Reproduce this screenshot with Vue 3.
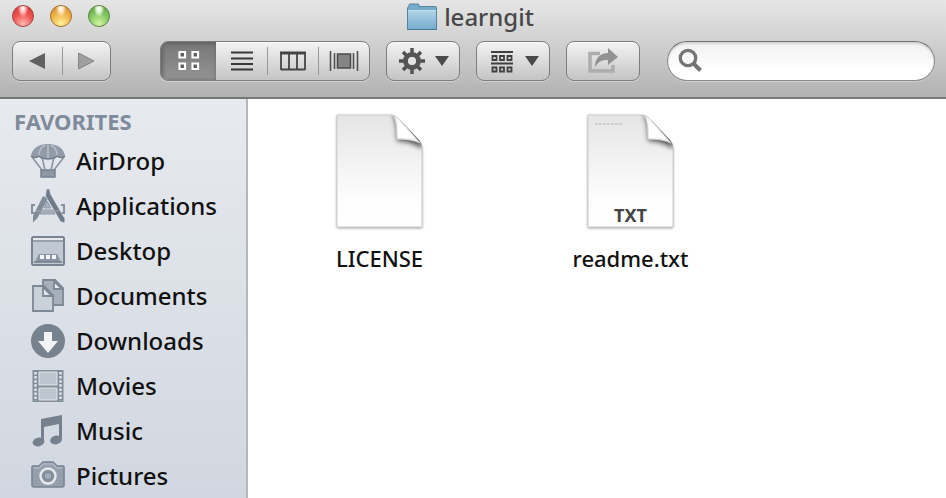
<script setup>
import { ref } from 'vue'

const places = ['AirDrop', 'Applications', 'Desktop', 'Documents', 'Downloads', 'Movies', 'Music', 'Pictures']
const files = [
  { name: 'LICENSE', kind: '' },
  { name: 'readme.txt', kind: 'TXT' },
]
const view = ref('icons')
const query = ref('')
</script>

<template>
  <div class="window">
    <header class="chrome">
      <div class="titlebar">
        <div class="lights">
          <button class="light red" aria-label="Close"></button>
          <button class="light amber" aria-label="Minimize"></button>
          <button class="light green" aria-label="Zoom"></button>
        </div>
        <h1 class="title">
          <svg width="32" height="28" viewBox="0 0 32 28" aria-hidden="true">
            <defs>
              <linearGradient id="folder" x1="0" y1="0" x2="0" y2="1">
                <stop offset="0" stop-color="#b3d4e7" />
                <stop offset="1" stop-color="#78acce" />
              </linearGradient>
            </defs>
            <path d="M1.500 26V4.500l1.500-1V2q0-1 1-1h8q1 0 1 1v1.500h16.500q1 0 1 1V26z" fill="#75abca" stroke="#5584a1" />
            <path d="M2 7h28v19H2z" fill="url(#folder)" />
            <path d="M2 7.500h28" stroke="#c1deed" />
            <path d="M1 26.500h30" stroke="#477693" />
          </svg>
          <span>learngit</span>
        </h1>
      </div>

      <div class="toolbar">
        <div class="group nav">
          <button class="seg" aria-label="Back">
            <svg width="18" height="18" viewBox="0 0 18 18"><path d="M1 9l16-8v16z" fill="#616161" /></svg>
          </button>
          <button class="seg" aria-label="Forward">
            <svg width="18" height="18" viewBox="0 0 18 18"><path d="M17 9L1.500 1v16z" fill="#a0a0a0" stroke="#858585" /></svg>
          </button>
        </div>

        <div class="group views">
          <button class="seg" :class="{ on: view === 'icons' }" aria-label="Icon view" @click="view = 'icons'">
            <svg width="24" height="22" viewBox="0 0 24 22" fill="#5a5a5a" stroke="#fff" stroke-width="2.200">
              <path d="M2.500 2h5.500v5.500H2.500zM15.500 2H21v5.500h-5.500zM2.500 13.500h5.500V19H2.500zM15.500 13.500H21V19h-5.500z" />
            </svg>
          </button>
          <button class="seg" :class="{ on: view === 'list' }" aria-label="List view" @click="view = 'list'">
            <svg width="22" height="22" viewBox="0 0 22 22" stroke="#383838" stroke-width="2">
              <path d="M0 2.500h22M0 8.500h22M0 14h22M0 19.500h22" />
            </svg>
          </button>
          <button class="seg" :class="{ on: view === 'columns' }" aria-label="Column view" @click="view = 'columns'">
            <svg width="26" height="20" viewBox="0 0 26 20" fill="none" stroke="#444" stroke-width="1.800">
              <path d="M1 2.500h24M1 18.500h24M1 1v18M9 2v17M17 2v17M25 1v18" />
              <path d="M0 1.500h26" />
            </svg>
          </button>
          <button class="seg" :class="{ on: view === 'flow' }" aria-label="Cover Flow view" @click="view = 'flow'">
            <svg width="30" height="20" viewBox="0 0 30 20" fill="none" stroke="#515151" stroke-width="1.600">
              <path d="M1.500 0v20M5.500 2v16M24.500 2v16M28.500 0v20" />
              <path d="M8.500 3h13v14h-13z" fill="#858585" stroke="#4c4c4c" stroke-width="1.600" />
            </svg>
          </button>
        </div>

        <button class="tool" aria-label="Action">
          <svg width="28" height="28" viewBox="-14 -14 28 28">
            <g stroke="#505050" stroke-width="3.400">
              <path d="M0-13V13M-13 0H13M-9-9L9 9M9-9L-9 9" />
            </g>
            <circle r="6.500" fill="#e2e2e2" stroke="#555" stroke-width="5" />
            <circle r="3.800" fill="#e2e2e2" />
          </svg>
          <svg width="14" height="10" viewBox="0 0 14 10"><path d="M0 0h14L7 10z" fill="#4a4a4a" /></svg>
        </button>
        <button class="tool" aria-label="Arrange">
          <svg class="arrange" width="22" height="24" viewBox="0 0 22 24" fill="none" stroke="#404040" stroke-width="1.800">
            <path d="M0 3h22M0 14.500h22" stroke-width="2" />
            <path d="M1.500 7h4v4h-4zM9 7h4v4H9zM16.500 7h4v4h-4zM1.500 18.500h4v4h-4zM9 18.500h4v4H9zM16.500 18.500h4v4h-4z" />
          </svg>
          <svg width="14" height="10" viewBox="0 0 14 10"><path d="M0 0h14L7 10z" fill="#4a4a4a" /></svg>
        </button>
        <button class="tool" aria-label="Share">
          <svg width="32" height="26" viewBox="0 0 32 26">
            <path d="M13 5.500H3V23h23v-6" fill="none" stroke="#adadad" stroke-width="3.500" />
            <path d="M21 0l10 9-10 8v-5c-6-.5-10 2-13 7C8 10.500 13 5 21 5z" fill="#929292" />
          </svg>
        </button>

        <label class="search">
          <svg width="26" height="26" viewBox="0 0 26 26" fill="none" stroke="#757575">
            <circle cx="10" cy="10" r="7.700" stroke-width="3.300" />
            <path d="M15.500 15.500l7 7" stroke-width="4" />
          </svg>
          <input v-model="query" type="search" aria-label="Search" />
        </label>
      </div>
    </header>

    <div class="body">
      <nav class="sidebar">
        <h2>FAVORITES</h2>
        <a v-for="place in places" :key="place" href="#">
          <svg width="36" height="36" viewBox="0 0 36 36" aria-hidden="true">
            <g v-if="place === 'AirDrop'">
              <path d="M2 14l10 13M34 14L24 27M12 14l3 13M24 14l-3 13" stroke="#8b95a1" stroke-width="1.600" />
              <path d="M1 13C2 5 9 1 18 1s16 4 17 12c-2 2-6 2-8 0-2 2-6 3-9 3s-7-1-9-3c-2 2-6 2-8 0z" fill="#929ca8" />
              <path d="M9 13c0-5 2-9 6-11M27 13c0-5-2-9-6-11M18 2v13" fill="none" stroke="#b6bec8" stroke-width="1.500" />
              <path d="M1 13c2 2 6 2 8 0 4 4 14 4 18 0 2 2 6 2 8 0" fill="none" stroke="#727e8b" stroke-width="1.500" />
              <path d="M11 27h14v7H11z" fill="#8f99a5" stroke="#778390" stroke-width="1.500" />
            </g>
            <g v-else-if="place === 'Applications'">
              <path d="M5 17H2v8h5M31 17h3v8h-5" fill="none" stroke="#87929f" stroke-width="2" />
              <path d="M11 22h14v4H10zM17 13l4 7h-7z" fill="#a7b0ba" stroke="#929ca8" />
              <path d="M13 8l5 2.500L7.500 30 3 34.500l0-6.500z" fill="#818c99" />
              <path d="M16.500 1h3l1 5L35 31l-.5 4-4-1.500L15.500 8z" fill="#6f7b88" stroke="#dce2e7" stroke-width=".6" />
              <path d="M6 23h23" stroke="#a0aab4" />
            </g>
            <g v-else-if="place === 'Desktop'" transform="translate(1 3)">
              <rect x="1" y="1" width="32" height="28" rx="1.500" fill="#c0c8d1" stroke="#788491" stroke-width="2" />
              <path d="M2 3h30" stroke="#eef1f4" stroke-width="1.600" />
              <path d="M2 5h30" stroke="#7c8794" stroke-width="1.200" />
              <path d="M8 18h18l4 8H4z" fill="#8a95a1" />
              <path d="M9 19h4v4H9zM15 19h4v4h-4zM21 19h4v4h-4z" fill="#f3f5f7" />
              <path d="M3 26h28" stroke="#737f8b" stroke-width="1.500" />
            </g>
            <g v-else-if="place === 'Documents'" stroke="#7d8895" stroke-width="1.800">
              <path d="M13 2h12l8 8v17H13z" fill="#a7b0bb" />
              <path d="M24 3v8h8z" fill="#e7eaee" />
              <path d="M3 8h11l9 9v16H3z" fill="#cbd1d8" />
              <path d="M13 9v9h9z" fill="#e3e7eb" />
            </g>
            <g v-else-if="place === 'Downloads'">
              <circle cx="18" cy="18" r="17" fill="#77828f" />
              <path d="M14 9h8v9h6L18 30 8 18h6z" fill="#f1f3f6" />
            </g>
            <g v-else-if="place === 'Movies'">
              <path d="M2.500 2h31v32h-31z" fill="#808c98" />
              <path d="M9 4h18v13H9zM9 20h18v12H9z" fill="#bdc5ce" stroke="#e2e6ea" />
              <path d="M5.500 4v29M30.500 4v29" stroke="#e3e7eb" stroke-width="2.500" stroke-dasharray="2.500 1.600" />
            </g>
            <g v-else-if="place === 'Music'" fill="#76818e">
              <path d="M11 6l21-4v24h-3V11l-15 3v15h-3z" />
              <ellipse cx="8.500" cy="29" rx="6" ry="4.300" transform="rotate(-12 8.500 29)" />
              <ellipse cx="26" cy="27" rx="6" ry="4.300" transform="rotate(-12 26 27)" />
            </g>
            <g v-else transform="translate(0 1)">
              <path d="M2 8q0-1 1-1h6l4-4h10l4 4h6q1 0 1 1v18q0 2-2 2H4q-2 0-2-2z" fill="#96a0ac" stroke="#788491" stroke-width="1.600" />
              <path d="M3 9h6l4-4h10l4 4h6" fill="none" stroke="#aeb7c1" stroke-width="1.500" />
              <circle cx="18" cy="17" r="7.500" fill="#8994a0" stroke="#e6eaee" stroke-width="2.400" />
              <circle cx="18" cy="17" r="4" fill="#a0a9b4" stroke="#78838f" />
            </g>
          </svg>
          <span>{{ place }}</span>
        </a>
      </nav>

      <main class="files">
        <button v-for="file in files" :key="file.name" class="file">
          <span class="page">
            <svg width="96" height="122" viewBox="0 0 96 122" aria-hidden="true">
              <defs>
                <linearGradient id="paper" x1="0" y1="0" x2="0" y2="1">
                  <stop offset="0" stop-color="#e5e5e5" />
                  <stop offset=".75" stop-color="#fdfdfd" />
                  <stop offset="1" stop-color="#fff" />
                </linearGradient>
                <filter id="soft" x="-20%" y="-20%" width="140%" height="140%"><feGaussianBlur stdDeviation="1.500" /></filter>
                <filter id="curl" x="-50%" y="-50%" width="200%" height="200%"><feGaussianBlur stdDeviation="2.500" /></filter>
                <clipPath id="sheet"><path d="M5 4h54q4 0 8 4l19 20q4 4 4 8v80H5z" /></clipPath>
              </defs>
              <path d="M5 5h54l31 31v81H5z" fill="#888" filter="url(#soft)" />
              <path d="M5 4h54q4 0 8 4l19 20q4 4 4 8v80H5z" fill="url(#paper)" stroke="#cfcfcf" />
              <g clip-path="url(#sheet)">
                <path d="M60 3q5 6 5 27 14 0 25 8V26L66 4z" fill="#555" filter="url(#curl)" />
              </g>
              <path d="M61 4q4 4 4 24 15 0 23 4L67 8q-3-3-6-4z" fill="#f4f4f4" stroke="#d2d2d2" />
              <path d="M66 9v18h17z" fill="#fff" />
              <path v-if="file.kind" d="M12 13h28" stroke="#cfcfcf" stroke-width="2" stroke-dasharray="3 1" />
            </svg>
            <span v-if="file.kind" class="kind">{{ file.kind }}</span>
          </span>
          <span class="name">{{ file.name }}</span>
        </button>
      </main>
    </div>
  </div>
</template>

<style>
body {
  margin: 0;
}
</style>

<style scoped>
* {
  box-sizing: border-box;
}
.window {
  display: flex;
  flex-direction: column;
  min-height: 100vh;
  background: #fff;
  font-family: "Noto Sans", "Open Sans", sans-serif;
  color: #111;
}
button {
  margin: 0;
  padding: 0;
  border: 0;
  background: none;
  font: inherit;
  color: inherit;
}
svg {
  display: block;
  flex: none;
}
.chrome {
  padding-bottom: 16px;
  border-bottom: 2px solid #777;
  background: linear-gradient(#e6e6e6, #cdcdcd 50%, #b2b2b2);
}
.titlebar {
  display: grid;
  grid-template-columns: 1fr auto 1fr;
  align-items: center;
  height: 34px;
  padding: 0 18px 0 12px;
}
.lights {
  display: flex;
  gap: 16px;
  padding-bottom: 2px;
}
.light {
  width: 22px;
  height: 22px;
  border-radius: 50%;
}
.red {
  border: 1px solid #a14240;
  background: radial-gradient(ellipse at 50% 12%, #fff 0, #fbb0ac 20%, transparent 36%), radial-gradient(circle at 50% 90%, #ffb9b0, #f0544f 50%, #c93633);
}
.amber {
  border: 1px solid #a56e2c;
  background: radial-gradient(ellipse at 50% 12%, #fff 0, #fbdcae 20%, transparent 36%), radial-gradient(circle at 50% 90%, #fff3a0, #f2b64a 50%, #cc8428);
}
.green {
  border: 1px solid #55883c;
  background: radial-gradient(ellipse at 50% 12%, #fff 0, #d5efc4 20%, transparent 36%), radial-gradient(circle at 50% 90%, #d5f7a6, #86c763 50%, #5a9c3f);
}
.title {
  display: flex;
  align-items: center;
  gap: 6px;
  margin: 0;
  font-size: 24px;
  line-height: 34px;
  font-weight: 500;
  color: #484848;
}
.toolbar {
  display: flex;
  align-items: center;
  gap: 16px;
  padding: 7px 11px 0 12px;
}
.group,
.tool {
  display: flex;
  flex: none;
  height: 40px;
  border: 1px solid #7d7d7d;
  border-radius: 8px;
  background: linear-gradient(#f3f3f3, #dcdcdc 50%, #c4c4c4);
  box-shadow: 0 1px 0 #d2d2d2, inset 0 1px 0 #fafafa;
  overflow: hidden;
}
.nav {
  width: 99px;
  margin-right: 33px;
}
.views {
  width: 210px;
}
.seg {
  display: flex;
  flex: 1;
  align-items: center;
  justify-content: center;
  position: relative;
}
.seg + .seg::before {
  content: "";
  position: absolute;
  left: 0;
  top: 5px;
  bottom: 5px;
  width: 1px;
  background: #999;
}
.views .seg:first-child {
  flex: 0 0 55px;
}
.seg.on {
  background: linear-gradient(#777, #939393);
  box-shadow: inset 1px 1px 4px #555;
}
.seg.on + .seg::before {
  display: none;
}
.tool {
  width: 74px;
  align-items: center;
  justify-content: center;
  gap: 9px;
}
.arrange {
  margin: 0 3px;
}
.search {
  display: flex;
  flex: 1;
  align-items: center;
  min-width: 0;
  height: 40px;
  margin-left: 11px;
  padding: 0 16px 0 10px;
  border: 1px solid #8b8b8b;
  border-top-color: #6f6f6f;
  border-radius: 20px;
  background: linear-gradient(#f1f1f1, #fff 70%);
  box-shadow: inset 0 2px 2px #d5d5d5, 0 1px 0 #d0d0d0;
}
.search input {
  flex: 1;
  min-width: 0;
  margin-left: 6px;
  border: 0;
  outline: 0;
  background: none;
  font: inherit;
  font-size: 22px;
}
.body {
  display: flex;
  flex: 1;
}
.sidebar {
  flex: none;
  width: 248px;
  border-right: 2px solid #b4b7bd;
  background: linear-gradient(#e7eaef, #d1d7e0);
}
.sidebar h2 {
  height: 39px;
  margin: 0;
  padding: 5px 0 0 14px;
  font-size: 22px;
  line-height: 34px;
  font-weight: 700;
  color: #7f8b9b;
}
.sidebar a {
  display: flex;
  align-items: center;
  gap: 10px;
  height: 45px;
  padding-left: 30px;
  font-size: 24px;
  line-height: 34px;
  font-weight: 500;
  color: #111;
  text-decoration: none;
}
.files {
  display: flex;
  flex: 1;
  flex-wrap: wrap;
  align-content: flex-start;
  padding: 12px 6px;
}
.file {
  display: flex;
  flex-direction: column;
  align-items: center;
  width: 251px;
}
.page {
  position: relative;
}
.kind {
  position: absolute;
  left: 0;
  right: 0;
  bottom: 7px;
  font-size: 18px;
  line-height: 22px;
  font-weight: 700;
  color: #444;
  text-align: center;
}
.name {
  margin-top: 8px;
  font-size: 22px;
  line-height: 34px;
  font-weight: 500;
}
</style>
